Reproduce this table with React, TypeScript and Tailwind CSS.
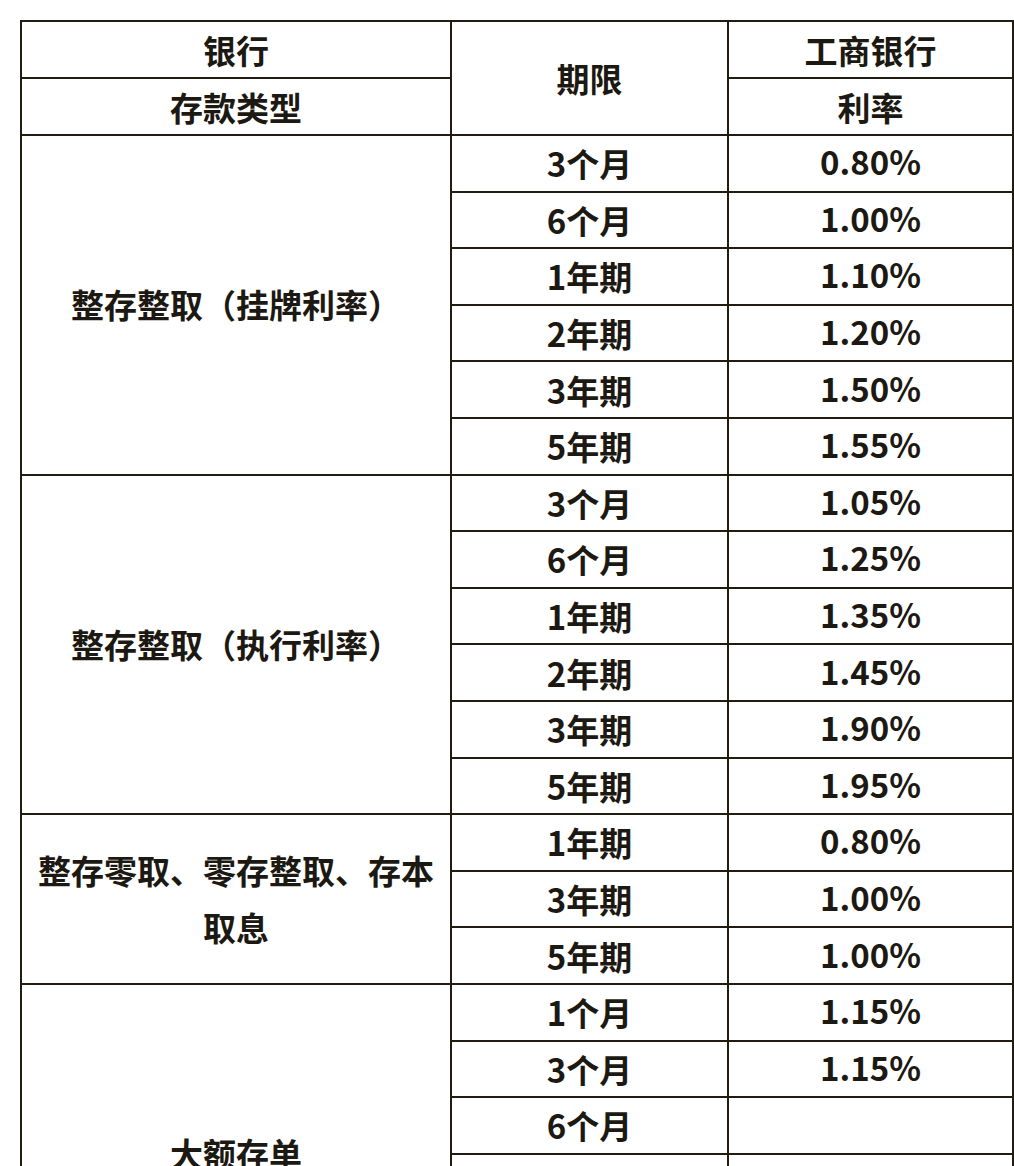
import * as React from "react";

type RateRow = { term: string; rate: string };
type Group = { name: React.ReactNode; rows: RateRow[] };

const groups: Group[] = [
  {
    name: "整存整取（挂牌利率）",
    rows: [
      { term: "3个月", rate: "0.80%" },
      { term: "6个月", rate: "1.00%" },
      { term: "1年期", rate: "1.10%" },
      { term: "2年期", rate: "1.20%" },
      { term: "3年期", rate: "1.50%" },
      { term: "5年期", rate: "1.55%" },
    ],
  },
  {
    name: "整存整取（执行利率）",
    rows: [
      { term: "3个月", rate: "1.05%" },
      { term: "6个月", rate: "1.25%" },
      { term: "1年期", rate: "1.35%" },
      { term: "2年期", rate: "1.45%" },
      { term: "3年期", rate: "1.90%" },
      { term: "5年期", rate: "1.95%" },
    ],
  },
  {
    name: "整存零取、零存整取、存本取息",
    rows: [
      { term: "1年期", rate: "0.80%" },
      { term: "3年期", rate: "1.00%" },
      { term: "5年期", rate: "1.00%" },
    ],
  },
  {
    name: "大额存单",
    rows: [
      { term: "1个月", rate: "1.15%" },
      { term: "3个月", rate: "1.15%" },
      { term: "6个月", rate: "" },
      { term: "1年期", rate: "" },
      { term: "2年期", rate: "" },
      { term: "3年期", rate: "" },
    ],
  },
];

// shared cell look: thick dark rule, centered text
const cell = "border-2 border-[#221c10] text-center align-middle p-0";

export default function App() {
  return (
    <div
      className="min-h-[1166px] bg-white pl-[20px] pt-[20px] text-[#1c1812] text-[33px] font-semibold leading-[40px]"
      style={{ fontFamily: '"Noto Sans CJK SC", "Noto Sans", sans-serif' }}
    >
      <table className="w-[992px] table-fixed border-collapse">
        <colgroup>
          <col className="w-[430px]" />
          <col className="w-[277px]" />
          <col className="w-[285px]" />
        </colgroup>
        <thead>
          <tr className="h-[57px]">
            <td className={cell}>银行</td>
            <td className={cell} rowSpan={2}>期限</td>
            <td className={cell}>工商银行</td>
          </tr>
          <tr className="h-[57px]">
            <td className={cell}>存款类型</td>
            <td className={cell}>利率</td>
          </tr>
        </thead>
        <tbody>
          {groups.map((g, gi) =>
            g.rows.map((r, ri) => (
              <tr key={`${gi}-${ri}`} className="h-[56.6px]">
                {ri === 0 && (
                  <td className={`${cell} px-[10px] leading-[57px]`} rowSpan={g.rows.length}>
                    {g.name}
                  </td>
                )}
                <td className={cell}>{r.term}</td>
                <td className={`${cell} pb-[4px]`}>{r.rate}</td>
              </tr>
            ))
          )}
        </tbody>
      </table>
    </div>
  );
}
